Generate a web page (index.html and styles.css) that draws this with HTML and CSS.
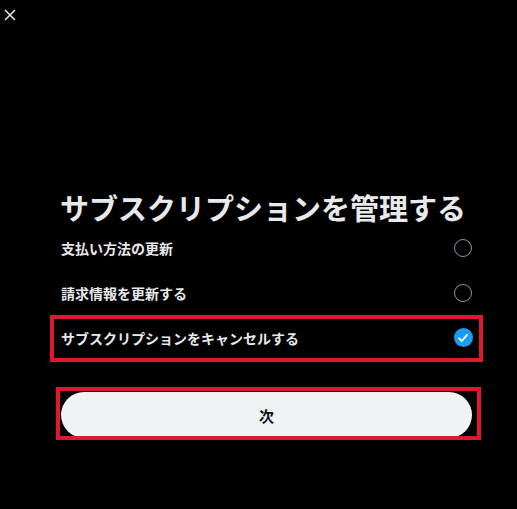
FILE: index.html
```html
<!DOCTYPE html>
<html lang="ja">
<head>
<meta charset="utf-8">
<title>サブスクリプションを管理する</title>
<link rel="stylesheet" href="styles.css">
</head>
<body>
<header class="topbar">
  <button class="close" aria-label="閉じる">
    <svg viewBox="0 0 12 12" width="12" height="12"><path d="M1 1 L11 11 M11 1 L1 11" stroke="#e7e9ea" stroke-width="1.5" fill="none"/></svg>
  </button>
</header>
<main class="panel">
  <h1 class="title">サブスクリプションを管理する</h1>
  <ul class="options">
    <li class="option"><span class="label">支払い方法の更新</span><span class="radio"></span></li>
    <li class="option"><span class="label">請求情報を更新する</span><span class="radio"></span></li>
    <li class="option"><span class="label">サブスクリプションをキャンセルする</span><span class="radio checked"><svg viewBox="0 0 18 18" width="18" height="18"><path d="M5 9.4 L7.8 12 L13 6" stroke="#fff" stroke-width="1.8" fill="none" stroke-linecap="round" stroke-linejoin="round"/></svg></span></li>
  </ul>
  <button class="next">次</button>
</main>
<div class="mark mark-option"></div>
<div class="mark mark-button"></div>
</body>
</html>
```
FILE: styles.css
```css
html, body {
  margin: 0;
  padding: 0;
  background: #000;
  height: 100%;
}
body {
  font-family: "Noto Sans CJK JP", "Noto Sans", sans-serif;
  color: #e7e9ea;
  position: relative;
  overflow: hidden;
}
.topbar {
  height: 30px;
  display: flex;
  align-items: flex-start;
}
.close {
  background: none;
  border: 0;
  padding: 0;
  margin: 9px 0 0 4px;
  width: 12px;
  height: 12px;
  display: block;
  cursor: pointer;
}
.close svg { display: block; }
.panel {
  width: 411px;
  margin: 0 0 0 61px;
  padding-top: 159px;
}
.title {
  margin: 0 0 0 -1px;
  font-size: 29px;
  line-height: 36px;
  font-weight: 700;
  white-space: nowrap;
}
.options {
  list-style: none;
  margin: 0;
  padding: 0;
}
.option {
  height: 45px;
  display: flex;
  align-items: center;
  justify-content: space-between;
}
.label {
  font-size: 14px;
  font-weight: 700;
  line-height: 20px;
}
.radio {
  width: 18px;
  height: 18px;
  box-sizing: border-box;
  border: 1.5px solid #8b98a5;
  border-radius: 50%;
  display: flex;
  align-items: center;
  justify-content: center;
}
.radio.checked {
  background: #1d9bf0;
  border: 0;
  width: 19px;
  height: 19px;
  margin-right: -0.5px;
}
.radio svg { display: block; }
.next {
  display: flex;
  align-items: center;
  justify-content: center;
  width: 411px;
  height: 46px;
  margin-top: 32px;
  border: 0;
  border-radius: 23px;
  background: #eff3f4;
  color: #0f1419;
  font-family: inherit;
  font-size: 15px;
  font-weight: 700;
}
.mark {
  position: absolute;
  border: 4px solid #e0182d;
  box-sizing: border-box;
  pointer-events: none;
}
.mark-option {
  left: 50px;
  top: 315px;
  width: 433px;
  height: 47px;
}
.mark-button {
  left: 56px;
  top: 387px;
  width: 425px;
  height: 53px;
}
```
